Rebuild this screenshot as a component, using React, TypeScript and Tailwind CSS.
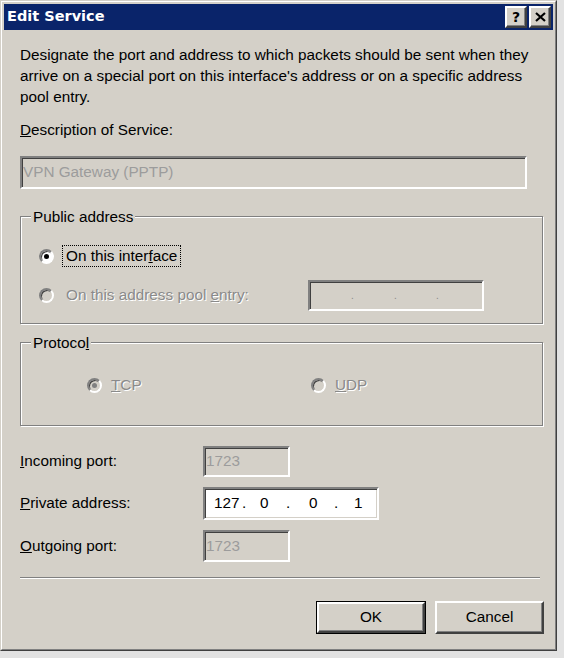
import React from "react";

const sunken =
  "border-2 border-t-[#808080] border-l-[#808080] border-b-white border-r-white shadow-[inset_1px_1px_0_#404040,inset_-1px_-1px_0_#d4d0c8]";
const raised =
  "border-2 border-t-white border-l-white border-b-[#404040] border-r-[#404040] shadow-[inset_-1px_-1px_0_#808080]";
const etched =
  "border border-[#808080] shadow-[inset_1px_1px_0_#fff,1px_1px_0_#fff]";
const disabledText = "text-[#8a8a8a] [text-shadow:1px_1px_0_#fff]";
const fieldText = "text-[#9c9c9c]";

function Radio({ checked, disabled }: { checked?: boolean; disabled?: boolean }) {
  return (
    <span
      className={`flex h-[15px] w-[15px] shrink-0 items-center justify-center rounded-full border-2 border-t-[#808080] border-l-[#808080] border-b-white border-r-white shadow-[inset_1px_1px_0_#404040] ${
        disabled ? "bg-[#d4d0c8]" : "bg-white"
      }`}
    >
      {checked && (
        <span className={`h-[5px] w-[5px] rounded-full ${disabled ? "bg-[#808080]" : "bg-black"}`} />
      )}
    </span>
  );
}

function GroupBox({ title, className, children }: { title: React.ReactNode; className: string; children: React.ReactNode }) {
  return (
    <div className={`relative w-[523px] ${etched} ${className}`}>
      <span className="absolute left-[10px] top-[-11px] bg-[#d4d0c8] px-[2px] leading-[21px]">{title}</span>
      {children}
    </div>
  );
}

export default function App() {
  return (
    <div className="min-h-screen bg-[#e2e2e2] font-['Liberation_Sans',Arial,sans-serif] text-[15.3px] text-black">
      <div className="h-[651px] w-[557px] border border-t-[#d4d0c8] border-l-[#d4d0c8] border-b-[#404040] border-r-[#404040] bg-[#d4d0c8]">
        <div className="flex h-full flex-col border border-t-white border-l-white border-b-[#808080] border-r-[#808080] p-[2px]">
          {/* title bar */}
          <div className="flex h-[26px] items-center justify-between bg-[#0a246a] pl-[3px] pr-[2px]">
            <span className="font-['DejaVu_Sans',Verdana,sans-serif] text-[14.5px] font-bold text-white">Edit Service</span>
            <div className="flex gap-[2px]">
              <button className={`flex h-[22px] w-[22px] items-center justify-center bg-[#d4d0c8] ${raised} font-['DejaVu_Sans',sans-serif] text-[14px] font-bold leading-none`}>
                ?
              </button>
              <button className={`flex h-[22px] w-[22px] items-center justify-center bg-[#d4d0c8] ${raised}`}>
                <svg width="11" height="10" viewBox="0 0 11 10">
                  <path d="M1 1 L10 9 M10 1 L1 9" stroke="#000" strokeWidth="2.2" />
                </svg>
              </button>
            </div>
          </div>

          <div className="flex flex-col pl-[16px] pr-[9px]">
            <p className="mt-[14px] w-[524px] leading-[21px]">
              Designate the port and address to which packets should be sent when they arrive on a special port on this interface's address or on a specific address pool entry.
            </p>
            <div className="mt-[12px] leading-[21px]">
              <u>D</u>escription of Service:
            </div>
            <div className={`mt-[16px] flex h-[33px] w-[507px] items-center bg-[#d4d0c8] pl-[1px] ${sunken} ${fieldText}`}>
              VPN Gateway (PPTP)
            </div>

            <GroupBox title="Public address" className="mt-[27px] h-[108px]">
              <div className="flex flex-col pl-[18px]">
                <div className="mt-[28px] flex items-center gap-[8px]">
                  <Radio checked />
                  <span className="border border-dotted border-black px-[3px] leading-[20px]">
                    On this inter<u>f</u>ace
                  </span>
                </div>
                <div className="mt-[13px] flex items-center">
                  <div className="flex w-[269px] items-center gap-[8px]">
                    <Radio disabled />
                    <span className={`px-[4px] ${disabledText}`}>
                      On this address pool <u>e</u>ntry:
                    </span>
                  </div>
                  <div className={`flex h-[31px] w-[176px] items-center bg-[#d4d0c8] ${sunken}`}>
                    <div className="flex w-full pl-[41px] text-[#8a8a8a]">
                      <span className="w-[43px] text-[10px] leading-none">.</span>
                      <span className="w-[42px] text-[10px] leading-none">.</span>
                      <span className="w-[42px] text-[10px] leading-none">.</span>
                    </div>
                  </div>
                </div>
              </div>
            </GroupBox>

            <GroupBox title={<>Protoco<u>l</u></>} className="mt-[18px] h-[84px]">
              <div className="mt-[31px] flex items-center pl-[66px]">
                <div className="flex w-[224px] items-center gap-[9px]">
                  <Radio checked disabled />
                  <span className={disabledText}>
                    <u>T</u>CP
                  </span>
                </div>
                <div className="flex items-center gap-[9px]">
                  <Radio disabled />
                  <span className={disabledText}>
                    <u>U</u>DP
                  </span>
                </div>
              </div>
            </GroupBox>

            <div className="mt-[20px] flex items-center">
              <span className="w-[183px]">
                <u>I</u>ncoming port:
              </span>
              <div className={`flex h-[31px] w-[87px] items-center bg-[#d4d0c8] pl-[1px] ${sunken} ${fieldText}`}>1723</div>
            </div>
            <div className="mt-[10px] flex items-center">
              <span className="w-[183px]">
                <u>P</u>rivate address:
              </span>
              <div className={`flex h-[33px] w-[176px] items-center bg-white ${sunken}`}>
                <div className="flex w-full items-center pl-[9px]">
                  <span className="w-[28px]">127</span>
                  <span className="w-[18px]">.</span>
                  <span className="w-[26px]">0</span>
                  <span className="w-[23px]">.</span>
                  <span className="w-[25px]">0</span>
                  <span className="w-[20px]">.</span>
                  <span>1</span>
                </div>
              </div>
            </div>
            <div className="mt-[10px] flex items-center">
              <span className="w-[183px]">
                <u>O</u>utgoing port:
              </span>
              <div className={`flex h-[32px] w-[87px] items-center bg-[#d4d0c8] pl-[1px] ${sunken} ${fieldText}`}>1723</div>
            </div>

            <div className="mt-[15px] h-[2px] w-[520px] border-t border-t-[#808080] border-b border-b-white" />

            <div className="mt-[22px] flex justify-end gap-[9px]">
              <button className="h-[33px] w-[110px] border border-black bg-[#d4d0c8]">
                <span className={`flex h-full w-full items-center justify-center ${raised}`}>OK</span>
              </button>
              <button className={`flex h-[33px] w-[109px] items-center justify-center bg-[#d4d0c8] ${raised}`}>Cancel</button>
            </div>
          </div>
        </div>
      </div>
    </div>
  );
}
